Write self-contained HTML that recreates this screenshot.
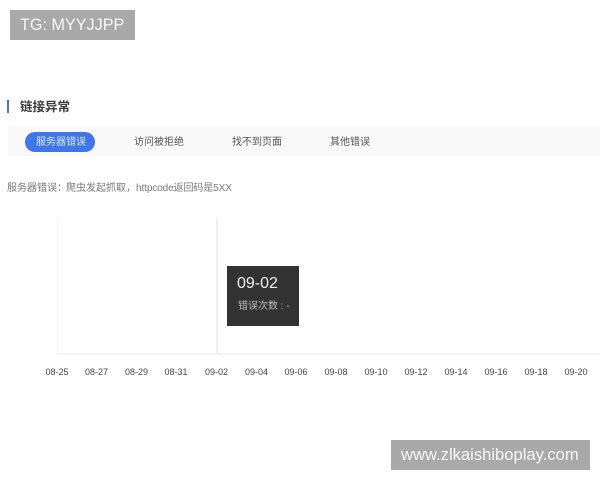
<!DOCTYPE html>
<html lang="zh">
<head>
<meta charset="utf-8">
<style>
html,body{margin:0;padding:0;background:#fff}
body{width:600px;height:480px;position:relative;overflow:hidden;font-family:"Liberation Sans","Noto Sans CJK SC",sans-serif}
.a{position:absolute;white-space:nowrap}
.t{filter:blur(.3px)}
.x{position:absolute;top:364px;width:60px;text-align:center;font-size:9px;line-height:16px;color:#444;filter:blur(.3px)}
</style>
</head>
<body>
<div class="a" style="left:10px;top:10px;width:125px;height:30px;background:#a9a9a9"></div>
<div class="a t" style="left:20px;top:10px;line-height:30px;font-size:16.2px;color:#f6f6f6;">TG: MYYJJPP</div>

<div class="a" style="left:7px;top:100px;width:2px;height:13px;background:#4a7ab5"></div>
<div class="a t" style="left:20px;top:98px;font-size:12.5px;line-height:18px;font-weight:bold;color:#3a3a3a">链接异常</div>

<div class="a" style="left:8px;top:126px;width:592px;height:30px;background:#f9f9f9"></div>
<div class="a" style="left:25px;top:132px;width:70px;height:20px;border-radius:10px;background:#3f76ee"></div>
<div class="a t" style="left:36px;top:134px;font-size:10px;line-height:18px;color:#dfe8fb">服务器错误</div>
<div class="a t" style="left:134px;top:134px;font-size:10px;line-height:18px;color:#555">访问被拒绝</div>
<div class="a t" style="left:232px;top:134px;font-size:10px;line-height:18px;color:#555">找不到页面</div>
<div class="a t" style="left:330px;top:134px;font-size:10px;line-height:18px;color:#555">其他错误</div>

<div class="a t" style="left:7px;top:180px;font-size:10px;line-height:18px;color:#777">服务器错误：</div>
<div class="a t" style="left:66px;top:180px;font-size:10px;line-height:18px;color:#777">爬虫发起抓取，</div>
<div class="a t" style="left:136px;top:180px;font-size:10px;line-height:18px;color:#777;letter-spacing:-.1px">httpcode返回码是5XX</div>

<div class="a" style="left:56.5px;top:219px;width:1.5px;height:135px;background:#f5f5f5"></div>
<div class="a" style="left:216px;top:219px;width:1.5px;height:135px;background:#eeeeee"></div>
<div class="a" style="left:56px;top:353px;width:544px;height:2px;background:#f2f2f2"></div>

<div class="a" style="left:227px;top:266px;width:72px;height:60px;background:#333"></div>
<div class="a t" style="left:237px;top:275px;font-size:16px;line-height:18px;color:#eee">09-02</div>
<div class="a t" style="left:238px;top:299px;font-size:10px;line-height:16px;color:#bbb">错误次数 : -</div>

<div class="x" style="left:27px">08-25</div>
<div class="x" style="left:66.5px">08-27</div>
<div class="x" style="left:106.5px">08-29</div>
<div class="x" style="left:146px">08-31</div>
<div class="x" style="left:186.5px">09-02</div>
<div class="x" style="left:226.5px">09-04</div>
<div class="x" style="left:266px">09-06</div>
<div class="x" style="left:306px">09-08</div>
<div class="x" style="left:346px">09-10</div>
<div class="x" style="left:386px">09-12</div>
<div class="x" style="left:426px">09-14</div>
<div class="x" style="left:466px">09-16</div>
<div class="x" style="left:506px">09-18</div>
<div class="x" style="left:546px">09-20</div>

<div class="a" style="left:391px;top:440px;width:199px;height:30px;background:#a9a9a9"></div>
<div class="a t" style="left:401px;top:440px;line-height:30px;font-size:16.6px;color:#f6f6f6">www.zlkaishiboplay.com</div>
</body>
</html>
